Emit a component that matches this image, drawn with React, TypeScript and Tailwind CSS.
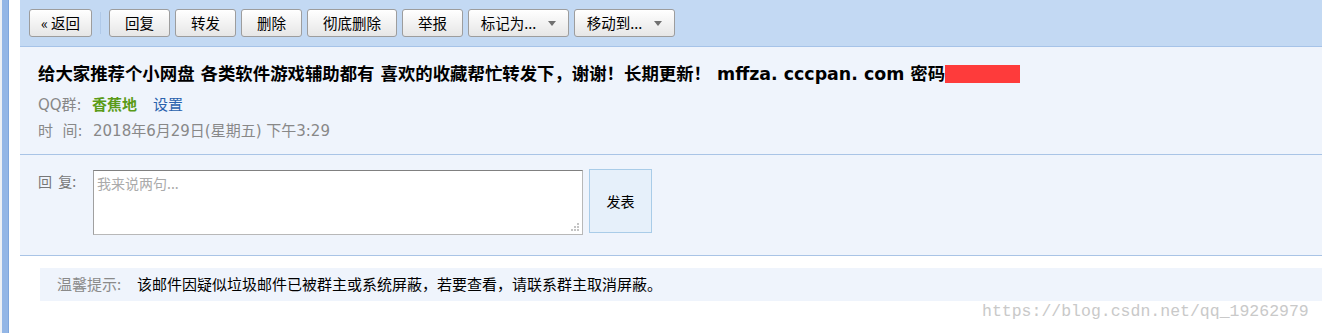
import React from "react";

function Btn({ w, children, drop }: { w: string; children: React.ReactNode; drop?: boolean }) {
  return (
    <div
      className={`${w} h-[28px] flex items-center justify-center rounded-[3px] border border-[#9d9d9d] bg-gradient-to-b from-[#ffffff] to-[#e6e6e6] text-[14.5px] text-black shadow-[inset_0_1px_0_#fff]`}
    >
      <span className="whitespace-pre">{children}</span>
      {drop && (
        <span className="ml-[12px] mt-[1px] w-0 h-0 border-l-[4px] border-r-[4px] border-t-[5px] border-l-transparent border-r-transparent border-t-[#707070]" />
      )}
    </div>
  );
}

export default function App() {
  return (
    <div className="relative w-[1322px] h-[333px] flex bg-white overflow-hidden font-['Noto_Sans_CJK_SC',sans-serif]">
      <div className="w-[2px] bg-[#eef1f5]" />
      <div className="w-[7px] bg-[#93b6e6] border-r border-[#7fa6dc]" />
      <div className="w-[11px] bg-white" />
      <div className="flex-1 flex flex-col">
        {/* toolbar */}
        <div className="h-[47px] bg-[#c3d9f3] border-b border-[#a6c3e8] flex items-start pt-[9px] pl-[9px]">
          <Btn w="w-[63px]">« 返回</Btn>
          <div className="w-px h-[22px] mt-[3px] mx-[8px] bg-[#e6eef9] border-l border-[#b0c9e8]" />
          <div className="flex gap-[5px]">
            <Btn w="w-[61px]">回复</Btn>
            <Btn w="w-[61px]">转发</Btn>
            <Btn w="w-[61px]">删除</Btn>
            <Btn w="w-[90px]">彻底删除</Btn>
            <Btn w="w-[61px]">举报</Btn>
            <Btn w="w-[101px]" drop>标记为...</Btn>
            <Btn w="w-[101px]" drop>移动到...</Btn>
          </div>
        </div>
        {/* subject */}
        <div className="bg-[#eff4fc] border-b border-[#a9c4e6] pl-[18px] pt-[14px] pb-[10px]">
          <div className="h-[26px] flex items-center text-[17.4px] font-bold text-black font-['DejaVu_Sans','Noto_Sans_CJK_SC',sans-serif] whitespace-nowrap">
            <span>给大家推荐个小网盘 各类软件游戏辅助都有 喜欢的收藏帮忙转发下，谢谢！长期更新！ mffza. cccpan. com 密码</span>
            <span className="inline-block w-[75px] h-[18px] bg-[#fe3b3b]" />
          </div>
          <div className="h-[26px] mt-[5px] flex items-center text-[15px] text-[#888] font-['DejaVu_Sans','Noto_Sans_CJK_SC',sans-serif]">
            <span className="w-[54px]">QQ群:</span>
            <span className="font-bold text-[#5a9b17]">香蕉地</span>
            <span className="ml-[16px] text-[#2a62ad]">设置</span>
          </div>
          <div className="h-[26px] flex items-center text-[15px] text-[#888] font-['DejaVu_Sans','Noto_Sans_CJK_SC',sans-serif]">
            <span className="w-[55px] whitespace-pre">时  间:</span>
            <span>2018年6月29日(星期五) 下午3:29</span>
          </div>
        </div>
        {/* reply */}
        <div className="bg-[#eff4fc] border-b border-[#a9c4e6] pl-[18px] pt-[14px] pb-[20px] flex items-start">
          <span className="w-[55px] mt-[2px] text-[14px] text-[#777] whitespace-pre">回  复:</span>
          <div className="relative mt-[1px] w-[490px] h-[65px]">
            <textarea
              placeholder="我来说两句..."
              className="block w-full h-full resize-none bg-white border border-t-[#808080] border-l-[#a0a0a0] border-r-[#b8b8b8] border-b-[#b8b8b8] px-[3px] py-[2px] text-[14px] placeholder:text-[#aaa] outline-none"
            />
            <svg className="absolute right-[3px] bottom-[3px]" width="9" height="9" viewBox="0 0 9 9">
              <rect x="6" y="0" width="2" height="2" fill="#c4c4c4" />
              <rect x="3" y="3" width="2" height="2" fill="#c4c4c4" />
              <rect x="6" y="3" width="2" height="2" fill="#c4c4c4" />
              <rect x="0" y="6" width="2" height="2" fill="#c4c4c4" />
              <rect x="3" y="6" width="2" height="2" fill="#c4c4c4" />
              <rect x="6" y="6" width="2" height="2" fill="#c4c4c4" />
            </svg>
          </div>
          <div className="ml-[6px] w-[63px] h-[64px] flex items-center justify-center bg-[#e6f0fa] border border-[#a9cce8] text-[14px] text-black">
            发表
          </div>
        </div>
        {/* tip */}
        <div className="mt-[12px] ml-[20px] h-[33px] bg-[#eff4fc] flex items-center pl-[17px] text-[15px]">
          <span className="w-[80px] text-[#8a8a8a]">温馨提示:</span>
          <span className="text-black">该邮件因疑似垃圾邮件已被群主或系统屏蔽，若要查看，请联系群主取消屏蔽。</span>
        </div>
      </div>
      <div className="absolute left-[982px] top-[300px] text-[16.5px] text-[#c9c9c9] font-['Liberation_Mono',monospace] whitespace-nowrap">
        https://blog.csdn.net/qq_19262979
      </div>
    </div>
  );
}
